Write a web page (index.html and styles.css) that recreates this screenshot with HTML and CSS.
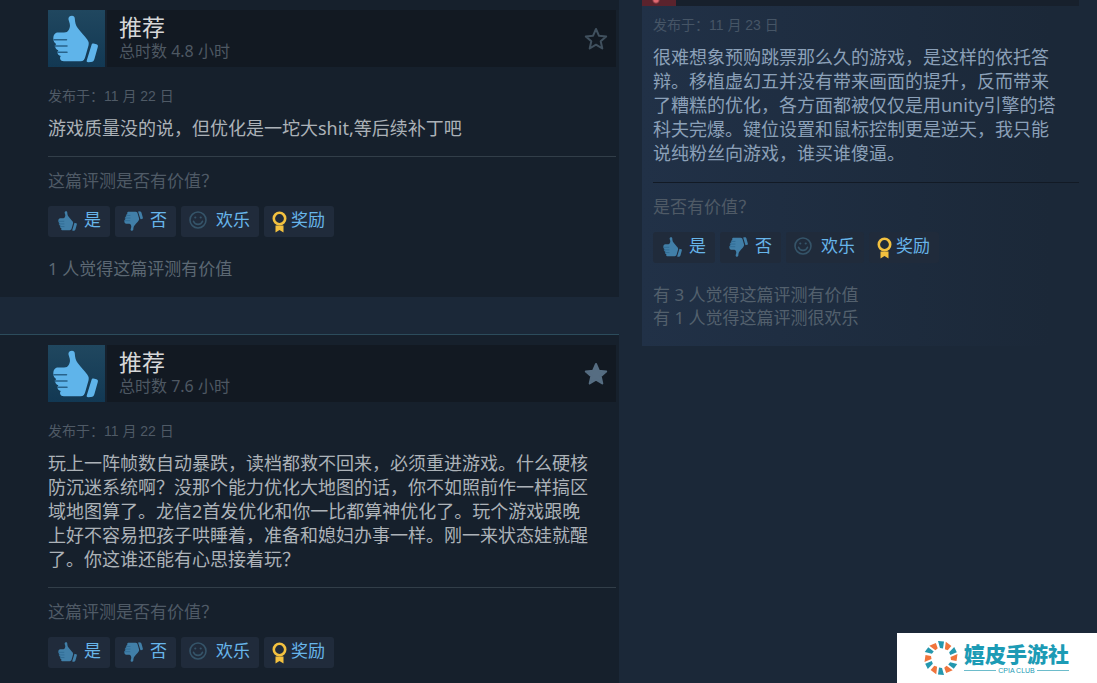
FILE: index.html
```html
<!DOCTYPE html>
<html lang="zh-CN">
<head>
<meta charset="utf-8">
<meta name="viewport" content="width=device-width, initial-scale=1">
<title>用户评测</title>
<link rel="stylesheet" href="styles.css">
</head>
<body>
<svg class="sprite" aria-hidden="true">
  <symbol id="thumb" viewBox="5 4 47 48">
    <path d="M24 4.700c1.700 0 2.700 1 2.800 2.800.2 4 .9 7 2.900 9.500 3 4 7 8 9.500 11.500 1.500 2 1.900 3.500 1.300 6L37.500 45c-.8 3.300-2 5.300-5 5.300H16c-2.500 0-4-1.300-4-3.300 0-.9.300-1.600.8-2.100-2-.3-3.300-1.700-3.300-3.400 0-.9.300-1.700.9-2.300-2-.4-3.200-1.900-3.200-3.700 0-1 .4-1.900 1-2.500C6.300 32 5.300 30 5.300 27.500 5.300 24 7 21.500 10 21.500h6c2.500 0 3.700-.8 4.700-2.500 1.300-2.300 1.500-4 1-6.500l-1.200-4C20 6.200 21.700 4.700 24 4.700z"/>
    <path d="M45.500 32.500l3 .8c1.300.4 1.700 1.300 1.300 2.700l-3.300 11.700c-.6 2.300-1.600 3.200-3.500 3.400l-2.800.2c-1.300 0-1.800-.8-1.400-2l4.700-15.300c.4-1.300 1-1.700 2-1.500z"/>
    <path class="crease" d="M6 28.700h12.500M7 35h12M10 41.300h9"/>
  </symbol>
  <symbol id="smile" viewBox="0 0 18 18">
    <g fill="none" stroke="currentColor" stroke-width="1.600">
      <circle cx="9" cy="9" r="8"/>
      <path d="M4.500 10.200c1.500 4.200 7.500 4.200 9 0" stroke-linecap="round"/>
    </g>
    <circle cx="6.300" cy="6.500" r="1.100" fill="currentColor"/>
    <circle cx="11.700" cy="6.500" r="1.100" fill="currentColor"/>
  </symbol>
  <symbol id="award" viewBox="0 0 15 22">
    <circle cx="7.500" cy="7.500" r="5.700" fill="none" stroke="currentColor" stroke-width="2.600"/>
    <path fill="currentColor" d="M3.500 14.500h8V21.500L7.500 19l-4 2.500z"/>
  </symbol>
  <symbol id="star" viewBox="0 0 24 24">
    <path d="M12 2l2.900 6.700 7.300.7-5.500 4.900 1.600 7.200-6.300-3.800-6.300 3.800 1.600-7.200-5.500-4.900 7.300-.7z" stroke="currentColor" stroke-width="2" stroke-linejoin="round"/>
  </symbol>
  <symbol id="ring" viewBox="-18 -18 36 36">
    <g fill="#f0743c">
      <path id="wedge" d="M-4-16.500L3-15.500 2-10-1-9.500z" transform="rotate(-30)"/>
      <use href="#wedge" transform="rotate(60)"/>
      <use href="#wedge" transform="rotate(120)"/>
      <use href="#wedge" transform="rotate(180)"/>
      <use href="#wedge" transform="rotate(240)"/>
      <use href="#wedge" transform="rotate(300)"/>
    </g>
    <g fill="#2497ae">
      <path id="wedge2" d="M-3-17L3-16.500 2-9.500-1-10z"/>
      <use href="#wedge2" transform="rotate(60)"/>
      <use href="#wedge2" transform="rotate(120)"/>
      <use href="#wedge2" transform="rotate(180)"/>
      <use href="#wedge2" transform="rotate(240)"/>
      <use href="#wedge2" transform="rotate(300)"/>
    </g>
  </symbol>
</svg>

<main class="page">
  <section class="main-column">
    <article class="review">
      <header class="review-head">
        <span class="verdict-icon"><svg><use href="#thumb"/></svg></span>
        <div class="verdict">
          <div class="verdict-text">
            <h2 class="title">推荐</h2>
            <p class="hours">总时数 4.8 小时</p>
          </div>
          <button class="star" type="button" aria-label="收藏"><svg><use href="#star"/></svg></button>
        </div>
      </header>
      <p class="date">发布于：11 月 22 日</p>
      <p class="content">游戏质量没的说，但优化是一坨大shit,等后续补丁吧</p>
      <p class="question">这篇评测是否有价值？</p>
      <div class="actions">
        <button class="btn btn-yes" type="button"><svg class="hand"><use href="#thumb"/></svg>是</button>
        <button class="btn btn-no" type="button"><svg class="hand down"><use href="#thumb"/></svg>否</button>
        <button class="btn btn-funny" type="button"><svg class="face"><use href="#smile"/></svg>欢乐</button>
        <button class="btn btn-award" type="button"><svg class="medal"><use href="#award"/></svg>奖励</button>
      </div>
      <p class="votes">1 人觉得这篇评测有价值</p>
    </article>

    <article class="review review-last">
      <header class="review-head">
        <span class="verdict-icon"><svg><use href="#thumb"/></svg></span>
        <div class="verdict">
          <div class="verdict-text">
            <h2 class="title">推荐</h2>
            <p class="hours">总时数 7.6 小时</p>
          </div>
          <button class="star star-on" type="button" aria-label="已收藏"><svg><use href="#star"/></svg></button>
        </div>
      </header>
      <p class="date">发布于：11 月 22 日</p>
      <p class="content">玩上一阵帧数自动暴跌，读档都救不回来，必须重进游戏。什么硬核<br>防沉迷系统啊？没那个能力优化大地图的话，你不如照前作一样搞区<br>域地图算了。龙信2首发优化和你一比都算神优化了。玩个游戏跟晚<br>上好不容易把孩子哄睡着，准备和媳妇办事一样。刚一来状态娃就醒<br>了。你这谁还能有心思接着玩？</p>
      <p class="question">这篇评测是否有价值？</p>
      <div class="actions">
        <button class="btn btn-yes" type="button"><svg class="hand"><use href="#thumb"/></svg>是</button>
        <button class="btn btn-no" type="button"><svg class="hand down"><use href="#thumb"/></svg>否</button>
        <button class="btn btn-funny" type="button"><svg class="face"><use href="#smile"/></svg>欢乐</button>
        <button class="btn btn-award" type="button"><svg class="medal"><use href="#award"/></svg>奖励</button>
      </div>
    </article>
  </section>

  <aside class="side-column">
    <article class="recent">
      <div class="recent-head"><span class="recent-icon"></span></div>
      <div class="recent-body">
        <p class="date">发布于：11 月 23 日</p>
        <p class="content">很难想象预购跳票那么久的游戏，是这样的依托答<br>辩。移植虚幻五并没有带来画面的提升，反而带来<br>了糟糕的优化，各方面都被仅仅是用unity引擎的塔<br>科夫完爆。键位设置和鼠标控制更是逆天，我只能<br>说纯粉丝向游戏，谁买谁傻逼。</p>
        <p class="question">是否有价值？</p>
        <div class="actions">
          <button class="btn btn-yes" type="button"><svg class="hand"><use href="#thumb"/></svg>是</button>
          <button class="btn btn-no" type="button"><svg class="hand down"><use href="#thumb"/></svg>否</button>
          <button class="btn btn-funny" type="button"><svg class="face"><use href="#smile"/></svg>欢乐</button>
          <button class="btn btn-award" type="button"><svg class="medal"><use href="#award"/></svg>奖励</button>
        </div>
        <p class="votes">有 3 人觉得这篇评测有价值<br>有 1 人觉得这篇评测很欢乐</p>
      </div>
    </article>
  </aside>
</main>

<div class="watermark">
  <svg class="ring"><use href="#ring"/></svg>
  <div class="brand">
    <strong class="brand-name">嬉皮手游社</strong>
    <span class="brand-sub">CPIA CLUB</span>
  </div>
</div>
</body>
</html>
```

FILE: styles.css
```css
* {
  box-sizing: border-box;
}

body {
  margin: 0;
  background: #1b2838;
  color: #acb2b8;
  font-family: "Noto Sans", "Noto Sans CJK SC", sans-serif;
}

h2,
p {
  margin: 0;
  font-weight: 400;
}

.sprite {
  position: absolute;
  width: 0;
  height: 0;
}

.page {
  display: grid;
  grid-template-columns: minmax(0, 619fr) minmax(0, 478fr);
  min-height: 100vh;
}

.main-column {
  display: flex;
  flex-direction: column;
  gap: 37px;
}

.review {
  padding: 10px 3px 17px 48px;
  background: #16202c;
}

.review-last {
  flex: 1;
  padding-bottom: 12px;
  border-top: 1px solid #2c4c5c;
}

.review-head {
  display: flex;
  gap: 2px;
}

.verdict-icon {
  display: flex;
  flex: none;
  align-items: center;
  justify-content: center;
  width: 57px;
  height: 57px;
  background: linear-gradient(#20475f, #123853);
  color: #5fb4ea;
}

.verdict-icon svg {
  width: 47px;
  height: 48px;
  fill: currentColor;
}

.crease {
  fill: none;
  stroke: #28628a;
  stroke-width: 1.500;
  stroke-linecap: round;
}

.verdict {
  display: flex;
  flex: 1;
  align-items: center;
  justify-content: space-between;
  padding: 0 8px 0 12px;
  background: #121922;
}

.verdict-text {
  padding-bottom: 3px;
}

.title {
  color: #d6d7d8;
  font-size: 23px;
  line-height: 27px;
}

.hours {
  color: #4e5862;
  font-size: 16px;
  line-height: 20px;
}

.star {
  padding: 0;
  border: 0;
  background: none;
  color: #40505e;
}

.star svg {
  display: block;
  width: 24px;
  height: 24px;
  fill: none;
}

.star-on {
  color: #566d82;
}

.star-on svg {
  fill: currentColor;
}

.date {
  margin-top: 19px;
  color: #4f5a66;
  font-family: "Liberation Sans", "Noto Sans CJK SC", sans-serif;
  font-size: 14px;
  line-height: 20px;
}

.content {
  margin-top: 10px;
  font-size: 18px;
  line-height: 24px;
  white-space: nowrap;
}

.question {
  margin-top: 16px;
  padding-top: 12px;
  border-top: 1px solid #323e49;
  color: #4f5a66;
  font-size: 17px;
  line-height: 23px;
}

.actions {
  display: flex;
  gap: 5px;
  margin-top: 14px;
}

.btn {
  display: flex;
  align-items: center;
  height: 31px;
  padding: 0 9px 4px;
  border: 0;
  border-radius: 3px;
  background: #202b3b;
  color: #67b5ea;
  font: inherit;
  font-size: 17px;
  line-height: 23px;
  white-space: nowrap;
}

.btn-yes {
  gap: 6px;
  padding-left: 10px;
}

.btn-no {
  gap: 6px;
}

.btn-funny {
  gap: 9px;
  padding-left: 8px;
}

.btn-award {
  gap: 4px;
  padding-left: 8px;
}

.hand {
  width: 20px;
  height: 20px;
  margin-top: 3px;
  fill: #417fa8;
}

.down {
  transform: scaleY(-1);
}

.btn .crease {
  stroke: none;
}

.face {
  width: 18px;
  height: 18px;
  color: #355469;
}

.medal {
  width: 15px;
  height: 22px;
  margin-top: 4px;
  color: #f3c13f;
}

.votes {
  margin-top: 20px;
  color: #5c6873;
  font-size: 17px;
  line-height: 23px;
}

.side-column {
  padding-left: 23px;
}

.recent {
  background: linear-gradient(90deg, #213147, #1b2838 90%);
}

.recent-head {
  height: 6px;
  margin-right: 18px;
  background: #17202c;
}

.recent-icon {
  display: block;
  width: 34px;
  height: 6px;
  background: radial-gradient(circle at 14px 0, #e26870 2px, transparent 4px), #5a232d;
}

.recent-body {
  padding: 9px 18px 17px 11px;
}

.recent .date {
  margin-top: 0;
  color: #465566;
}

.recent .content {
  color: #8ba0b8;
}

.recent .question {
  margin-top: 17px;
  border-color: #121a25;
}

.recent .votes {
  color: #53606d;
}

.watermark {
  position: fixed;
  right: 0;
  bottom: 0;
  display: flex;
  align-items: center;
  gap: 5px;
  width: 200px;
  height: 50px;
  padding-left: 26px;
  background: #fff;
}

.ring {
  width: 36px;
  height: 36px;
}

.brand {
  display: flex;
  flex-direction: column;
  color: #1c9bb5;
}

.brand-name {
  font-size: 21px;
  font-weight: 900;
  line-height: 25px;
}

.brand-sub {
  display: flex;
  align-items: center;
  gap: 2px;
  font-family: "Liberation Sans", sans-serif;
  font-size: 7px;
  line-height: 8px;
}

.brand-sub::before,
.brand-sub::after {
  flex: 1;
  height: 1px;
  background: #6dbccb;
  content: "";
}
```
